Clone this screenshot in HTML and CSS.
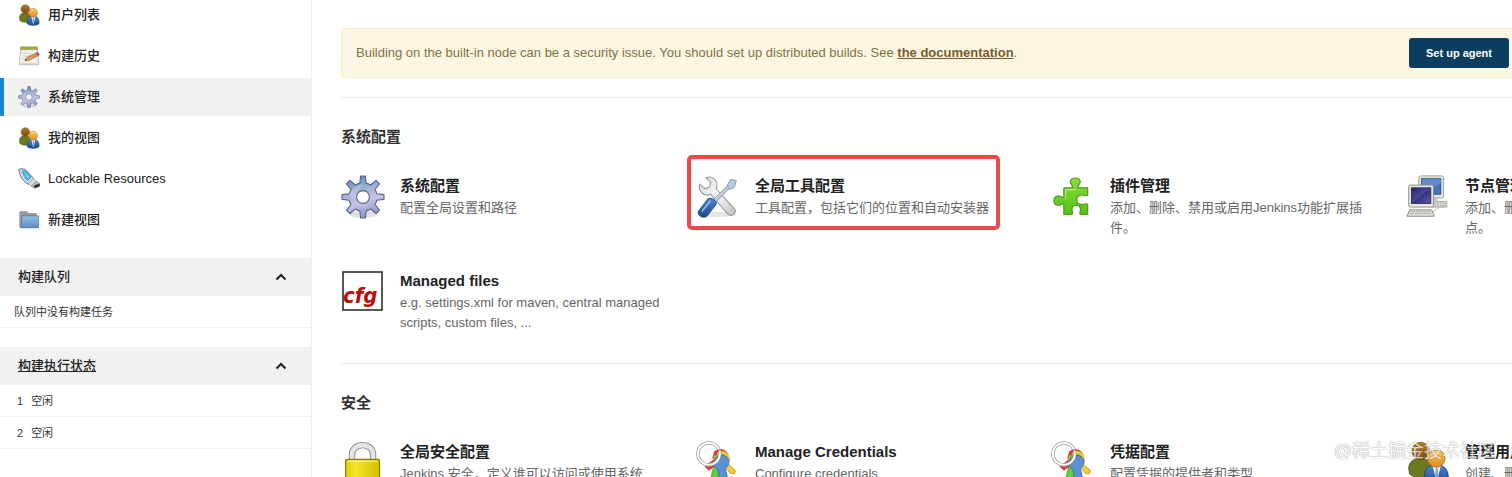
FILE: index.html
```html
<!DOCTYPE html>
<html lang="zh-CN">
<head>
  <meta charset="UTF-8" />
  <title>系统管理 [Jenkins]</title>
  <link rel="stylesheet" href="styles.css">
</head>

<body>
  <!-- Shared icons -->
  <svg class="sprite" aria-hidden="true">
    <defs>
      <linearGradient id="gearFill" x1="0" y1="0" x2="0.3" y2="1">
        <stop offset="0" stop-color="#5a7db0" />
        <stop offset="0.45" stop-color="#a3b3d6" />
        <stop offset="0.7" stop-color="#c9c3e3" />
        <stop offset="1" stop-color="#8f9dc6" />
      </linearGradient>
      <linearGradient id="brownFill" x1="0" y1="0" x2="0" y2="1">
        <stop offset="0" stop-color="#b57b24" />
        <stop offset="1" stop-color="#7d4a10" />
      </linearGradient>
      <linearGradient id="orangeFill" x1="0" y1="0" x2="0" y2="1">
        <stop offset="0" stop-color="#fbc45a" />
        <stop offset="1" stop-color="#dd8c20" />
      </linearGradient>
      <linearGradient id="blueFill" x1="0" y1="0" x2="0" y2="1">
        <stop offset="0" stop-color="#4f88cf" />
        <stop offset="1" stop-color="#1d4789" />
      </linearGradient>
      <linearGradient id="metalFill" x1="0" y1="0" x2="1" y2="1">
        <stop offset="0" stop-color="#d5d5d5" />
        <stop offset="0.5" stop-color="#fafafa" />
        <stop offset="1" stop-color="#bdbdbd" />
      </linearGradient>
      <linearGradient id="greenFill" x1="0" y1="0" x2="0" y2="1">
        <stop offset="0" stop-color="#8ade3c" />
        <stop offset="1" stop-color="#55c018" />
      </linearGradient>
      <linearGradient id="yellowFill" x1="0" y1="0" x2="1" y2="0">
        <stop offset="0" stop-color="#e0cc00" />
        <stop offset="0.3" stop-color="#f6e72a" />
        <stop offset="1" stop-color="#d3be00" />
      </linearGradient>
      <linearGradient id="folderFill" x1="0" y1="0" x2="0" y2="1">
        <stop offset="0" stop-color="#9abfe3" />
        <stop offset="1" stop-color="#5c8fc4" />
      </linearGradient>
      <linearGradient id="screenFill" x1="0" y1="0" x2="1" y2="1">
        <stop offset="0" stop-color="#29276e" />
        <stop offset="0.5" stop-color="#4b4a95" />
        <stop offset="0.52" stop-color="#33327d" />
        <stop offset="1" stop-color="#5f60a8" />
      </linearGradient>
    </defs>

    <symbol id="icon-gear" viewBox="0 0 48 48">
      <ellipse cx="24" cy="43" rx="15" ry="4" fill="#000" opacity="0.12" />
      <path transform="translate(24 24)" fill="url(#gearFill)" fill-rule="evenodd" stroke="#55648f" stroke-width="1.2" stroke-linejoin="round" d="M22.9-2.6V2.6L15.1 3.5A15.5 15.5 0 0 1 13.1 8.2L18 14.3 14.3 18 8.2 13.1A15.5 15.5 0 0 1 3.5 15.1L2.6 22.9H-2.6L-3.5 15.1A15.5 15.5 0 0 1-8.2 13.1L-14.3 18-18 14.3-13.1 8.2A15.5 15.5 0 0 1-15.1 3.5L-22.9 2.6V-2.6L-15.1-3.5A15.5 15.5 0 0 1-13.1-8.2L-18-14.3-14.3-18-8.2-13.1A15.5 15.5 0 0 1-3.5-15.1L-2.6-22.9H2.6L3.5-15.1A15.5 15.5 0 0 1 8.2-13.1L14.3-18 18-14.3 13.1-8.2A15.5 15.5 0 0 1 15.1-3.5ZM7 0A7 7 0 1 0-7 0 7 7 0 1 0 7 0Z" />
      <path d="M10 24a14 14 0 0 1 15-14c-2 3-5 5-7 8s-1 5-3 8z" fill="#fff" opacity="0.22" />
    </symbol>

    <symbol id="icon-people" viewBox="0 0 48 48">
      <path d="M3 30c0-7 5-11 13-11s12 5 12 11v8c-5 3-19 3-24-2z" fill="#6a7a1e" stroke="#4a5710" />
      <circle cx="16" cy="11" r="9.5" fill="url(#brownFill)" stroke="#7d4f16" />
      <path d="M20 43c-1-11 3-17 13-17s14 7 13 17c-5 5-21 5-26 0z" fill="url(#blueFill)" stroke="#1c427d" />
      <path d="M29 27l4.500 18 4.500-18z" fill="#f4f7fb" />
      <path d="M32.500 29h2l1 10-2 3-2-3z" fill="#7fa6d6" />
      <circle cx="33" cy="19" r="9.500" fill="url(#orangeFill)" stroke="#b8700f" />
      <path d="M26 17a7.500 7.500 0 0 1 13-3c-4 0-9 0-13 3z" fill="#fff" opacity="0.3" />
    </symbol>

    <symbol id="icon-history" viewBox="0 0 24 24">
      <path d="M3 3h18l1.500 18.500h-21z" fill="#f1f1ef" stroke="#b9b9b5" />
      <path d="M3 2h18v3H3z" fill="#a3ad45" stroke="#848f35" stroke-width="0.600" />
      <path d="M5 9h10M5 12h8M4 15h4M3 20h18" stroke="#cfcfcd" />
      <path d="M7.500 17l2-3.500L21.500 8l1.800 2.800L11.500 17z" fill="#d99a55" stroke="#97602e" stroke-width="0.700" />
      <path d="M19.500 9l2-1 1.800 2.800-2 1.100z" fill="#cc4a4a" />
      <path d="M7.500 17l1-1.900 1.400 1.600z" fill="#333" />
    </symbol>

    <symbol id="icon-usb" viewBox="0 0 24 24">
      <path d="M1 1.500C4 .2 7.500.8 9.500 3l7.500 8.500-5 6.500C6 15.500 1.500 9 1 1.500z" fill="#c9d7e6" stroke="#56708f" />
      <path d="M5 3.200c2-.8 3.600 0 5 1.500l4 5-3.500 4C7.500 11 5.500 7 5 3.200z" fill="#3fb6e3" stroke="#2b86b4" stroke-width="0.600" />
      <path d="M7 5l5 5M8 8l3 3" stroke="#a5e0f5" />
      <path d="M16.500 11.500l4 3.500-5.500 5-3.500-3z" fill="#dedede" stroke="#858585" stroke-width="0.700" />
      <path d="M20 14.500l3.500 2.500v3L18 22l-3.500-2.200z" fill="#c4c4c4" stroke="#777" stroke-width="0.800" />
      <path d="M17.500 19l6-2v3L18 22z" fill="#292929" />
    </symbol>

    <symbol id="icon-folder" viewBox="0 0 24 24">
      <path d="M2 3h8l1.500 2H20v15H2z" fill="#9b9b97" stroke="#858585" stroke-width="0.800" />
      <path d="M4.500 7.500h18V20.500h-19z" fill="url(#folderFill)" stroke="#4877a8" stroke-width="0.800" />
    </symbol>

    <symbol id="icon-tools" viewBox="0 0 48 48">
      <ellipse cx="23" cy="43" rx="21" ry="3" fill="#000" opacity="0.1" />
      <path d="M4 10l6 5 5-2 1-5-5-5C19 0 25 7 22 15l20 22c3 4-3 9-7 6L16 21C9 24 2 18 4 10z" fill="url(#metalFill)" stroke="#9a9a9a" stroke-width="1.200" />
      <path d="M19 27L35 11l3-6 5 3-2 6-4 0-16 16z" fill="#c8ced9" stroke="#8390a6" />
      <path d="M34 11l4-6 6 1-2 7-5 3z" fill="#bccae0" stroke="#8796b3" />
      <path d="M13 26c4-2 10 2 9 6L12 45c-4 3-12-1-9-6z" fill="url(#blueFill)" stroke="#234d8c" />
      <path d="M15 29L7 39" stroke="#8fb8ea" stroke-width="2" stroke-linecap="round" />
    </symbol>

    <symbol id="icon-plugin" viewBox="0 0 48 48">
      <path d="M14 14h9c2-2-2-4-2-7 1-5 10-5 11 0 0 3-4 5-2 7h10v8c-2 2-4-1-8 0-5 1-5 9 0 10 4 1 6-2 8 0v11H32c-2-2 1-4 0-7-1-4-8-4-9 0-1 3 2 5 0 7h-9V32c-2-2-3 2-7 1-5-1-5-9 0-10 4-1 5 3 7 1z" fill="url(#greenFill)" stroke="#4c9c20" stroke-width="1.300" stroke-linejoin="round" />
      <path d="M16 26V16h11" fill="none" stroke="#b5f07a" stroke-width="1.200" />
    </symbol>

    <symbol id="icon-computers" viewBox="0 0 48 48">
      <path d="M31 29h12l2 6H28z" fill="#dededa" stroke="#999" />
      <path d="M31 31h11M31 33h12" stroke="#aaa" stroke-dasharray="2 1" />
      <rect x="14" y="1" width="27" height="24" rx="2" fill="#e8e8e3" stroke="#96968f" />
      <rect x="17" y="4" width="21" height="17" fill="#4473b9" stroke="#2c4f87" />
      <path d="M17 4h21v5L17 19z" fill="#7fa5da" opacity="0.500" />
      <path d="M25 25h9l1 4H24z" fill="#c9c9c4" />
      <path d="M41 29c6-2 6 2 1 4s-11 5-12 7" fill="none" stroke="#b0b0ab" />
      <rect x="3" y="11" width="27" height="24" rx="2" fill="#e8e8e3" stroke="#86867f" />
      <rect x="6" y="14" width="21" height="17" fill="url(#screenFill)" stroke="#29285c" />
      <path d="M4 38h24l3 7H1z" fill="#e3e3de" stroke="#85857f" />
      <path d="M5 40h22M4 42h24" stroke="#96968f" stroke-dasharray="2 1" />
    </symbol>

    <symbol id="icon-cfg" viewBox="0 0 44 44">
      <rect x="2" y="2" width="39" height="38" fill="#fff" stroke="#222" stroke-width="1.500" />
      <text class="cfg-text" x="2" y="33">cfg</text>
    </symbol>

    <symbol id="icon-lock" viewBox="0 0 48 48">
      <path d="M12 22v-7C12 1 35 1 35 15v7" fill="none" stroke="#888" stroke-width="7" />
      <path d="M12 22v-7C12 1 35 1 35 15v7" fill="none" stroke="#e4e4e4" stroke-width="5" />
      <rect x="5" y="20" width="37" height="27" rx="2" fill="url(#yellowFill)" stroke="#8a7c00" stroke-width="1.300" />
      <path d="M7 22h33" stroke="#fff99a" />
    </symbol>

    <symbol id="icon-keys" viewBox="0 0 48 48">
      <path d="M21 19l-11 9 4 4 11-8z" fill="#e04040" stroke="#b52a2a" stroke-width="0.800" />
      <path d="M30 21l13 11-1 4-5-1-9-11z" fill="#f1cd3b" stroke="#b89315" stroke-width="0.800" />
      <path d="M20 25l-5 20 7 2 6-20z" fill="#5bd13a" stroke="#35941c" stroke-width="0.800" />
      <circle cx="27" cy="18" r="9" fill="#d93c30" />
      <circle cx="28" cy="20" r="9" fill="#ecca35" />
      <circle cx="27" cy="22" r="8" fill="#5cb93e" />
      <path d="M20 25c-1-10 14-13 16-3 0 4-2 6-4 8l4 17h-9l-3-16c-2-1-4-3-4-6z" fill="#5b8fd6" stroke="#3d6eb0" />
      <ellipse cx="14" cy="14" rx="12" ry="12" fill="none" stroke="#999" stroke-width="3.600" />
      <ellipse cx="14" cy="14" rx="12" ry="12" fill="none" stroke="#fff" stroke-width="2" />
      <path d="M19 12a11 11 0 0 1 9-3c-3 1-5 3-6 8z" fill="#d93c30" />
    </symbol>

    <symbol id="icon-chevron" viewBox="0 0 12 12">
      <path d="M1.500 8.500L6 4l4.500 4.500" fill="none" stroke="#222" stroke-width="2" />
    </symbol>
  </svg>

  <!-- Left side panel -->
  <aside class="side-panel">
    <nav class="tasks">
      <a href="#" class="task"><svg class="task-icon"><use href="#icon-people" /></svg>用户列表</a>
      <a href="#" class="task"><svg class="task-icon"><use href="#icon-history" /></svg>构建历史</a>
      <a href="#" class="task active"><svg class="task-icon"><use href="#icon-gear" /></svg>系统管理</a>
      <a href="#" class="task"><svg class="task-icon"><use href="#icon-people" /></svg>我的视图</a>
      <a href="#" class="task"><svg class="task-icon"><use href="#icon-usb" /></svg>Lockable Resources</a>
      <a href="#" class="task"><svg class="task-icon"><use href="#icon-folder" /></svg>新建视图</a>
    </nav>

    <section class="pane">
      <div class="pane-header">
        <span>构建队列</span>
        <button type="button" class="collapse" aria-label="收起构建队列"><svg><use href="#icon-chevron" /></svg></button>
      </div>
      <div class="pane-row queue-empty">队列中没有构建任务</div>
    </section>

    <section class="pane">
      <div class="pane-header">
        <a href="#">构建执行状态</a>
        <button type="button" class="collapse" aria-label="收起构建执行状态"><svg><use href="#icon-chevron" /></svg></button>
      </div>
      <div class="pane-row"><span>1</span><span>空闲</span></div>
      <div class="pane-row"><span>2</span><span>空闲</span></div>
    </section>
  </aside>

  <!-- Main content -->
  <main class="main-panel">
    <div class="alert">
      <p>Building on the built-in node can be a security issue. You should set up distributed builds. See <a href="#">the documentation</a>.</p>
      <button type="button" class="agent-button">Set up agent</button>
    </div>

    <section class="manage-section">
      <h2>系统配置</h2>
      <div class="items">
        <a href="#" class="item">
          <svg class="item-icon"><use href="#icon-gear" /></svg>
          <span class="item-text"><strong>系统配置</strong><span>配置全局设置和路径</span></span>
        </a>
        <a href="#" class="item highlighted">
          <svg class="item-icon"><use href="#icon-tools" /></svg>
          <span class="item-text"><strong>全局工具配置</strong><span>工具配置，包括它们的位置和自动安装器</span></span>
        </a>
        <a href="#" class="item">
          <svg class="item-icon"><use href="#icon-plugin" /></svg>
          <span class="item-text"><strong>插件管理</strong><span>添加、删除、禁用或启用Jenkins功能扩展插件。</span></span>
        </a>
        <a href="#" class="item">
          <svg class="item-icon"><use href="#icon-computers" /></svg>
          <span class="item-text"><strong>节点管理</strong><span>添加、删除、控制和监视系统运行任务的节点。</span></span>
        </a>
        <a href="#" class="item">
          <svg class="item-icon"><use href="#icon-cfg" /></svg>
          <span class="item-text"><strong>Managed files</strong><span>e.g. settings.xml for maven, central managed scripts, custom files, ...</span></span>
        </a>
      </div>
    </section>

    <section class="manage-section">
      <h2>安全</h2>
      <div class="items">
        <a href="#" class="item">
          <svg class="item-icon"><use href="#icon-lock" /></svg>
          <span class="item-text"><strong>全局安全配置</strong><span>Jenkins 安全，定义谁可以访问或使用系统</span></span>
        </a>
        <a href="#" class="item">
          <svg class="item-icon"><use href="#icon-keys" /></svg>
          <span class="item-text"><strong>Manage Credentials</strong><span>Configure credentials</span></span>
        </a>
        <a href="#" class="item">
          <svg class="item-icon"><use href="#icon-keys" /></svg>
          <span class="item-text"><strong>凭据配置</strong><span>配置凭据的提供者和类型</span></span>
        </a>
        <a href="#" class="item">
          <svg class="item-icon"><use href="#icon-people" /></svg>
          <span class="item-text"><strong>管理用户</strong><span>创建、删除或修改用户</span></span>
        </a>
      </div>
    </section>
  </main>

  <div class="watermark">@稀土掘金技术社区</div>
</body>
</html>
```

FILE: styles.css
```css
/* Basic reset */
* {
  margin: 0;
  padding: 0;
  box-sizing: border-box;
}

body {
  position: relative;
  display: flex;
  height: 100vh;
  overflow: hidden;
  background-color: #fff;
  color: #333;
  font-family: "Liberation Sans", "Noto Sans CJK SC", sans-serif;
  font-size: 13px;
  line-height: 20px;
}

a {
  color: inherit;
}

.sprite {
  position: absolute;
  width: 0;
  height: 0;
}

.cfg-text {
  fill: #b80f0a;
  font-family: "DejaVu Sans Condensed", "DejaVu Sans", sans-serif;
  font-size: 22px;
  font-style: italic;
  font-weight: bold;
}

/* Left side panel */
.side-panel {
  flex: none;
  width: 312px;
  border-right: 1px solid #f0f0f0;
}

/* The list is scrolled a little past its top */
.tasks {
  display: flex;
  flex-direction: column;
  gap: 3px;
  margin-top: -4px;
  margin-bottom: 19px;
}

.task {
  display: flex;
  align-items: center;
  gap: 8px;
  height: 38px;
  padding-left: 14px;
  border-left: 4px solid transparent;
  color: #222;
  font-weight: 500;
  text-decoration: none;
}

.task.active {
  background-color: #f1f1f1;
  border-left-color: #1c84c9;
}

.task-icon {
  width: 22px;
  height: 22px;
}

.pane {
  margin-bottom: 19px;
}

.pane-header {
  display: flex;
  align-items: center;
  justify-content: space-between;
  height: 38px;
  padding: 0 24px 0 18px;
  background-color: #f1f1f1;
  color: #222;
  font-weight: 500;
}

.collapse {
  width: 12px;
  height: 12px;
  border: none;
  background: none;
  cursor: pointer;
}

.collapse svg {
  display: block;
  width: 12px;
  height: 12px;
}

.pane-row {
  display: flex;
  align-items: center;
  gap: 8px;
  height: 32px;
  padding-left: 17px;
  border-bottom: 1px solid #f0f0f0;
  font-size: 11px;
}

.queue-empty {
  padding-left: 14px;
}

/* Main content */
.main-panel {
  flex: 1;
  min-width: 0;
  padding-top: 28px;
  padding-left: 29px;
}

.alert {
  display: flex;
  align-items: center;
  justify-content: space-between;
  height: 50px;
  margin-bottom: 19px;
  padding: 0 3px 0 14px;
  border: 1px solid #f5efc9;
  border-right: none;
  border-radius: 4px 0 0 4px;
  background-color: #fcf7e2;
  color: #857042;
}

.alert a {
  color: #7a5b2c;
  font-weight: bold;
}

.agent-button {
  width: 100px;
  height: 30px;
  border: none;
  border-radius: 3px;
  background-color: #0b3d5f;
  color: #fff;
  font-family: inherit;
  font-size: 11px;
  font-weight: bold;
  cursor: pointer;
}

.manage-section {
  padding: 29px 0 30px;
  border-top: 1px solid #ebebeb;
}

.manage-section h2 {
  margin-bottom: 28px;
  color: #333;
  font-size: 15px;
  font-weight: bold;
  line-height: 20px;
}

.items {
  display: grid;
  grid-template-columns: repeat(4, minmax(330px, 1fr));
  gap: 32px 25px;
}

.item {
  position: relative;
  display: flex;
  align-items: flex-start;
  gap: 15px;
  text-decoration: none;
}

.item-icon {
  flex: none;
  width: 44px;
  height: 44px;
}

.item-text {
  display: flex;
  flex-direction: column;
  gap: 2px;
  color: #666;
}

.item-text strong {
  color: #222;
  font-size: 15px;
  line-height: 21px;
}

.highlighted::after {
  content: "";
  position: absolute;
  top: -20px;
  right: 26px;
  bottom: 8px;
  left: -9px;
  border: 4px solid #e94b4b;
  border-radius: 5px;
}

.watermark {
  position: absolute;
  right: 16px;
  bottom: 14px;
  color: #fff;
  font-size: 18px;
  line-height: 24px;
  text-shadow: 0 0 1px #777, 0 0 1px #888;
  opacity: 0.7;
}
```
